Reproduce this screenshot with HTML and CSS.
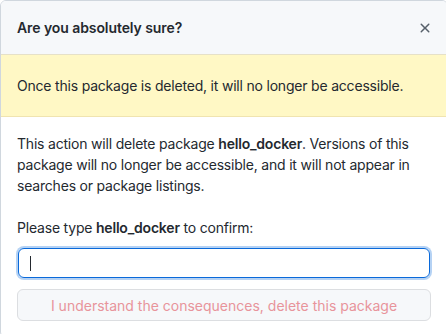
FILE: index.html
```html
<!DOCTYPE html>
<html>
<head>
<meta charset="utf-8">
<link rel="stylesheet" href="styles.css">
</head>
<body>
<div class="dialog">
  <div class="header">
    <h1 class="title">Are you absolutely sure?</h1>
    <button class="close" aria-label="Close">
      <svg width="16" height="16" viewBox="0 0 16 16"><path fill="currentColor" d="M3.72 3.72a.75.75 0 0 1 1.06 0L8 6.94l3.22-3.22a.749.749 0 0 1 1.275.326.749.749 0 0 1-.215.734L9.06 8l3.22 3.22a.749.749 0 0 1-.326 1.275.749.749 0 0 1-.734-.215L8 9.06l-3.22 3.22a.751.751 0 0 1-1.042-.018.751.751 0 0 1-.018-1.042L6.94 8 3.72 4.78a.75.75 0 0 1 0-1.06Z"/></svg>
    </button>
  </div>
  <div class="flash">Once this package is deleted, it will no longer be accessible.</div>
  <div class="body">
    <p class="text">This action will delete package <b>hello_docker</b>. Versions of this package will no longer be accessible, and it will not appear in searches or package listings.</p>
    <p class="label">Please type <b>hello_docker</b> to confirm:</p>
    <div class="input"><span class="caret"></span></div>
    <div class="danger-btn">I understand the consequences, delete this package</div>
  </div>
</div>
</body>
</html>
```
FILE: styles.css
```css
html, body {
  margin: 0;
  padding: 0;
  background: #ffffff;
}
body {
  font-family: Inter, "Liberation Sans", Arial, sans-serif;
  font-size: 14px;
  line-height: 21px;
  color: #24292f;
  overflow: hidden;
}
.dialog {
  width: 446px;
  border: 1px solid #d0d7de;
  border-radius: 6px;
  overflow: hidden;
  background: #fff;
}
.header {
  display: flex;
  align-items: center;
  justify-content: space-between;
  padding: 16px 14px 16px 16px;
  background: #f6f8fa;
  border-bottom: 1px solid #e6e1c8;
}
.title {
  margin: 0;
  font-size: 14px;
  line-height: 21px;
  font-weight: 600;
  letter-spacing: -0.08px;
}
.close {
  display: flex;
  padding: 0;
  border: 0;
  background: transparent;
  color: #57606a;
}
.flash {
  padding: 20px 16px;
  background: #fff8c5;
  border-bottom: 1px solid #f0e4b0;
  letter-spacing: -0.2px;
}
.body {
  padding: 16px;
  display: flex;
  flex-direction: column;
}
.text {
  margin: 0 0 21px;
  letter-spacing: -0.2px;
}
.label {
  margin: 0 0 10px;
  letter-spacing: -0.2px;
}
b {
  font-weight: 600;
}
.input {
  height: 28px;
  margin: 0 1px;
  padding: 0 11px;
  border: 1px solid #0969da;
  border-radius: 6px;
  box-shadow: 0 0 0 2px rgba(9, 105, 218, 0.3);
  display: flex;
  align-items: center;
}
.caret {
  width: 1px;
  height: 15px;
  background: #24292f;
}
.danger-btn {
  margin-top: 11px;
  height: 30px;
  border: 1px solid #dcdee1;
  border-radius: 6px;
  background: #f6f8fa;
  color: #e8949b;
  display: flex;
  align-items: center;
  justify-content: center;
  font-weight: 400;
}
```
